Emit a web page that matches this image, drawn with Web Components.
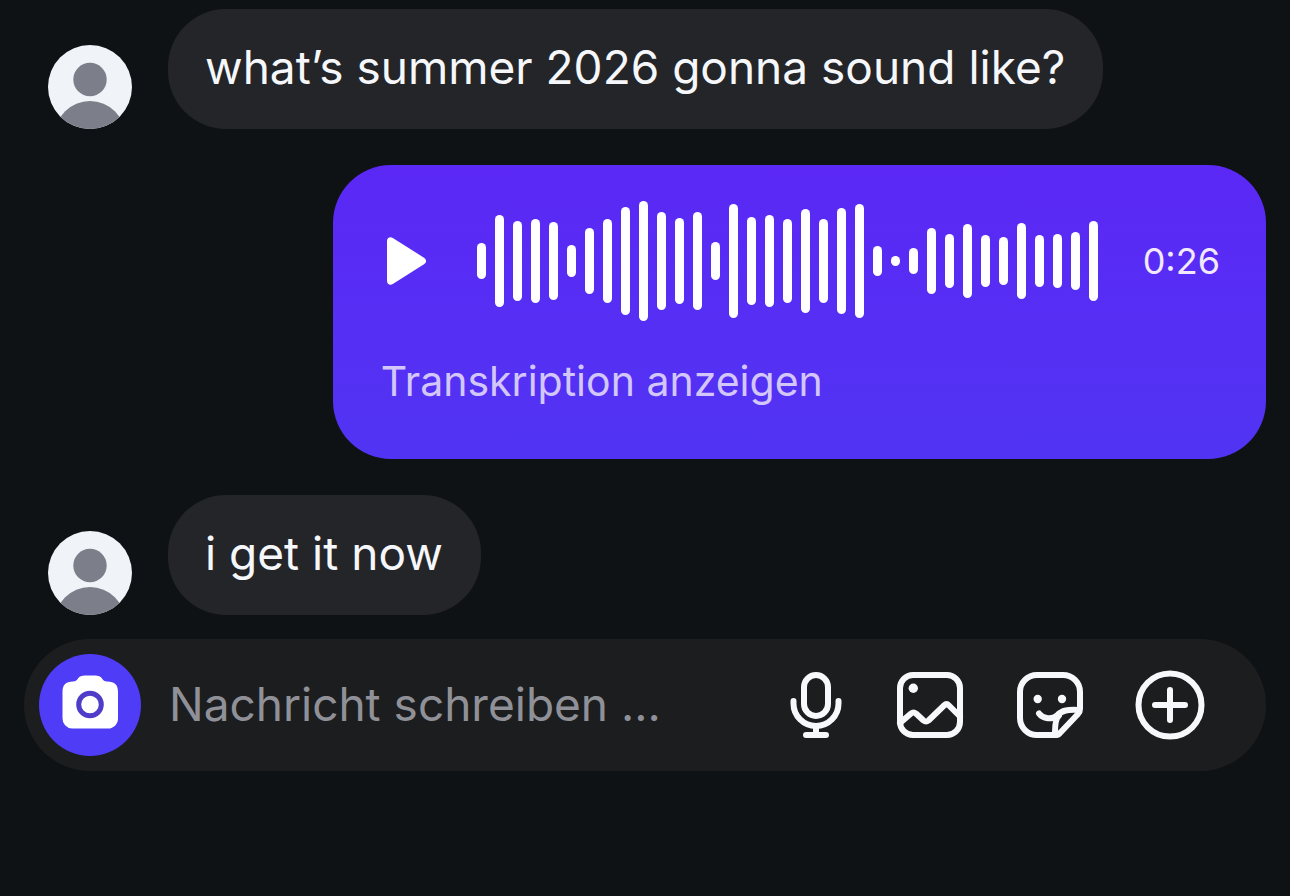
<!DOCTYPE html>
<html lang="de">
<head>
<meta charset="utf-8">
<meta name="viewport" content="width=device-width, initial-scale=1">
<title>Chat</title>
<style>
  body {
    margin: 0;
    min-height: 100vh;
    background: #0f1215;
    color: #f5f7fb;
    font-family: Inter, "Liberation Sans", sans-serif;
  }
</style>
</head>
<body>
<chat-thread>
  <chat-message>what’s summer 2026 gonna sound like?</chat-message>
  <voice-message duration="0:26" levels="36 92 80 84 78 32 66 84 108 120 98 86 98 38 114 88 92 84 104 84 106 114 30 10 26 66 54 74 52 48 76 52 54 58 80">Transkription anzeigen</voice-message>
  <chat-message>i get it now</chat-message>
</chat-thread>
<message-composer placeholder="Nachricht schreiben …"></message-composer>

<script>
class ChatThread extends HTMLElement {
  constructor() {
    super();
    this.attachShadow({ mode: "open" });
    this.shadowRoot.innerHTML = `
      <style>
        :host {
          display: flex;
          flex-direction: column;
          align-items: flex-start;
          gap: 36px;
          padding: 9px 24px 24px;
        }
        ::slotted(voice-message) {
          align-self: flex-end;
        }
      </style>
      <slot></slot>
    `;
  }
}

class UserAvatar extends HTMLElement {
  constructor() {
    super();
    this.attachShadow({ mode: "open" });
    this.shadowRoot.innerHTML = `
      <style>
        :host {
          display: block;
          flex: none;
          width: 84px;
          height: 84px;
          border-radius: 50%;
          overflow: hidden;
          background: #f0f3f8;
        }
        svg {
          display: block;
          fill: #7c7f89;
        }
      </style>
      <svg viewBox="0 0 84 84" aria-hidden="true">
        <circle cx="42" cy="34.5" r="16.7"/>
        <circle cx="42" cy="91.5" r="35.5"/>
      </svg>
    `;
  }
}

class ChatMessage extends HTMLElement {
  constructor() {
    super();
    this.attachShadow({ mode: "open" });
    this.shadowRoot.innerHTML = `
      <style>
        :host {
          display: flex;
          align-items: flex-end;
          gap: 36px;
          padding-left: 24px;
        }
        .bubble {
          padding: 28px 38px 32px 37px;
          border-radius: 58px;
          background: #242529;
          font-size: 46px;
          line-height: 60px;
        }
      </style>
      <user-avatar></user-avatar>
      <div class="bubble"><slot></slot></div>
    `;
  }
}

class VoiceMessage extends HTMLElement {
  constructor() {
    super();
    this.attachShadow({ mode: "open" });
    this.shadowRoot.innerHTML = `
      <style>
        :host {
          display: flex;
          flex-direction: column;
          align-items: flex-start;
          gap: 36px;
          padding: 36px 46px 54px 48px;
          border-radius: 58px;
          background: linear-gradient(#5b28f5, #5134f3);
        }
        button {
          padding: 0;
          border: 0;
          background: none;
          font: inherit;
          cursor: pointer;
        }
        .player {
          display: flex;
          align-items: center;
        }
        .play {
          width: 48px;
          height: 48px;
          margin-right: 48px;
        }
        svg {
          display: block;
        }
        .wave {
          display: flex;
          align-items: center;
          gap: 9px;
          height: 120px;
          margin-right: 45px;
        }
        .wave i {
          width: 9px;
          border-radius: 5px;
          background: #fff;
        }
        .time {
          font-size: 36px;
          line-height: 48px;
          color: #f3e9ff;
        }
        .transcript {
          font-size: 41px;
          line-height: 48px;
          color: #d3c6fb;
        }
      </style>
      <div class="player">
        <button class="play" aria-label="Abspielen">
          <svg viewBox="0 0 48 48" fill="#fff"><path d="M6 4.2C6 .8 9 -.8 11.800 1L43 20.700C45.800 22.500 45.800 25.500 43 27.300L11.800 47C9 48.800 6 47.200 6 43.800Z"/></svg>
        </button>
        <div class="wave"></div>
        <span class="time"></span>
      </div>
      <button class="transcript"><slot></slot></button>
    `;
  }

  connectedCallback() {
    this.shadowRoot.querySelector(".time").textContent = this.getAttribute("duration");
    const wave = this.shadowRoot.querySelector(".wave");
    this.getAttribute("levels").split(" ").forEach((level) => {
      const bar = document.createElement("i");
      bar.style.height = level + "px";
      wave.appendChild(bar);
    });
  }
}

class MessageComposer extends HTMLElement {
  constructor() {
    super();
    this.attachShadow({ mode: "open" });
    this.shadowRoot.innerHTML = `
      <style>
        :host {
          display: flex;
          align-items: center;
          margin: 0 24px;
          padding: 15px 60px 15px 15px;
          border-radius: 66px;
          background: #1c1d1f;
        }
        button {
          flex: none;
          padding: 0;
          border: 0;
          background: none;
          cursor: pointer;
        }
        svg {
          display: block;
        }
        .camera {
          width: 102px;
          height: 102px;
          border-radius: 50%;
          background: #4f3cf6;
        }
        input {
          flex: 1;
          min-width: 0;
          height: 60px;
          margin: 0 24px 0 28px;
          padding: 0 0 2px;
          border: 0;
          outline: 0;
          background: none;
          color: inherit;
          font: inherit;
          font-size: 46px;
        }
        input::placeholder {
          color: #909198;
          opacity: 1;
        }
        .actions {
          display: flex;
          gap: 48px;
        }
        .actions svg {
          height: 72px;
          fill: none;
          stroke: #f7f8fb;
          stroke-width: 6;
          stroke-linecap: round;
          stroke-linejoin: round;
        }
        .actions .dot {
          fill: #f7f8fb;
          stroke: none;
        }
      </style>
      <button class="camera" aria-label="Kamera">
        <svg viewBox="0 0 102 102">
          <path fill="#fff" d="M34 27.500C36.500 27.500 37.700 26.500 39 24.500C40.500 22.300 42.500 21.500 46 21.500H56C59.500 21.500 61.500 22.300 63 24.500C64.300 26.500 65.500 27.500 68 27.500C76 27.500 79 31 79 38V64A10 10 0 0 1 69 74.500H33A10 10 0 0 1 23.500 64V38C23.500 31 26.500 27.500 34 27.500Z"/>
          <circle cx="51" cy="50.500" r="11.300" fill="none" stroke="#4f3cc8" stroke-width="5"/>
        </svg>
      </button>
      <input type="text" aria-label="Nachricht schreiben">
      <div class="actions">
        <button aria-label="Sprachnachricht">
          <svg viewBox="0 0 60 72">
            <rect x="18" y="6" width="24" height="41" rx="12"/>
            <path d="M7.500 32V34.500A22.500 22.500 0 0 0 52.500 34.500V32M30 57V66M20 66H40"/>
          </svg>
        </button>
        <button aria-label="Bild">
          <svg viewBox="0 0 72 72">
            <rect x="6" y="6" width="60" height="60" rx="13"/>
            <circle class="dot" cx="19.300" cy="19.300" r="4.700"/>
            <path d="M6 54L17 44.500Q19.500 42.500 22 44.500L29.500 51.500Q32 53.500 34.500 51.500L50 36.500Q52.500 34 55 36.500L66 47.500"/>
          </svg>
        </button>
        <button aria-label="Sticker">
          <svg viewBox="0 0 72 72">
            <path d="M43 66H23A17 17 0 0 1 6 49V23A17 17 0 0 1 23 6H49A17 17 0 0 1 66 23V40Q66 43 64 45L46 64Q45 66 42 66"/>
            <path d="M25 44.500C29 50 38 51 43 46.500C48 41 54 40.500 65 41M45 46.500Q41 50 41 63"/>
            <circle class="dot" cx="23.700" cy="30" r="4.200"/>
            <circle class="dot" cx="48" cy="30" r="4.200"/>
          </svg>
        </button>
        <button aria-label="Mehr">
          <svg viewBox="0 0 72 72">
            <circle cx="36" cy="36" r="31.500"/>
            <path d="M36 21V51M21 36H51"/>
          </svg>
        </button>
      </div>
    `;
  }

  connectedCallback() {
    this.shadowRoot.querySelector("input").placeholder = this.getAttribute("placeholder");
  }
}

customElements.define("user-avatar", UserAvatar);
customElements.define("chat-thread", ChatThread);
customElements.define("chat-message", ChatMessage);
customElements.define("voice-message", VoiceMessage);
customElements.define("message-composer", MessageComposer);
</script>
</body>
</html>
